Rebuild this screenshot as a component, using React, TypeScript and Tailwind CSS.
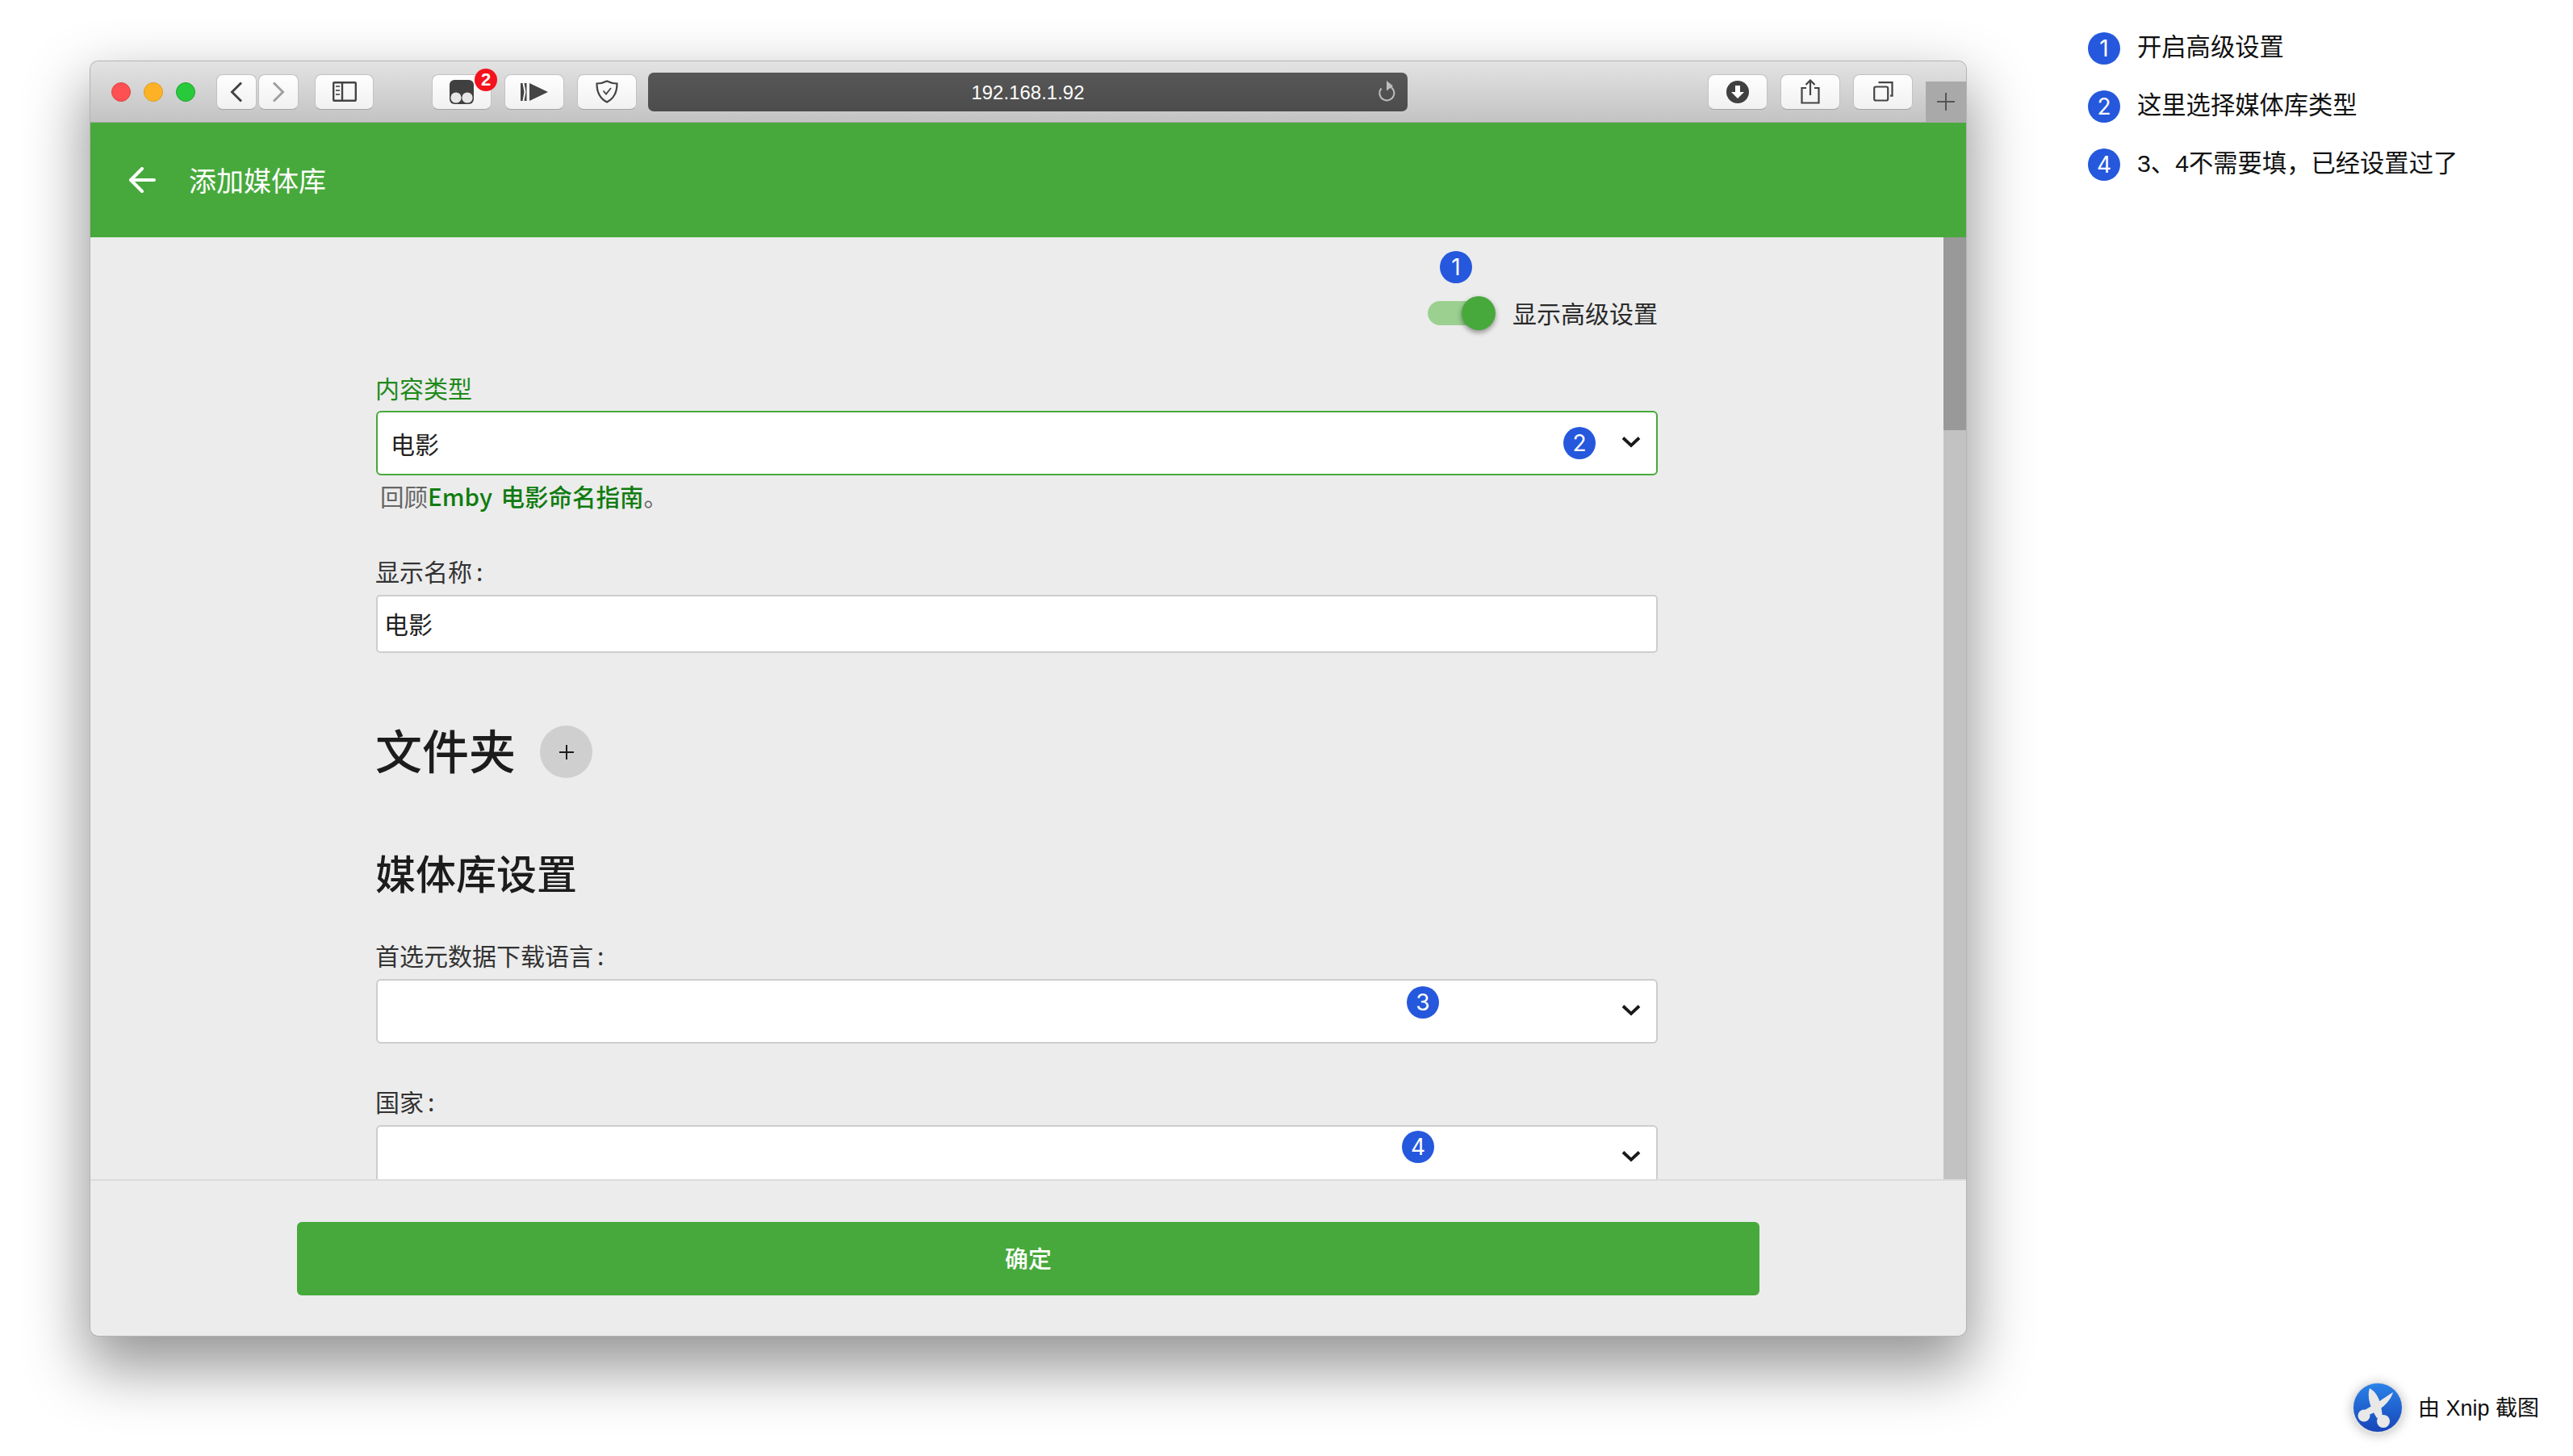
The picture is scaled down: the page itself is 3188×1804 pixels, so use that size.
import React from 'react';

const Chevron = () => (
  <svg width="24" height="15" viewBox="0 0 24 15" className="-mt-[3px]" fill="none" stroke="#1a1a1a" strokeWidth="3.8">
    <path d="M2 2.5 12 12 22 2.5" />
  </svg>
);

const Badge = ({ n, className = '' }: { n: number; className?: string }) => (
  <span className={`flex h-[40px] w-[40px] items-center justify-center rounded-full bg-[#2558dc] font-['Inter',sans-serif] text-[28px] leading-none text-white ${className}`}>
    {n}
  </span>
);

const ToolBtn = ({ w = 'w-[74px]', className = '', children }: { w?: string; className?: string; children?: React.ReactNode }) => (
  <div className={`relative flex h-[44px] ${w} items-center justify-center rounded-[8px] border border-[#c2c2c2] border-b-[#a5a5a5] bg-gradient-to-b from-[#fefefe] to-[#f1f1f1] ${className}`}>
    {children}
  </div>
);

const Select = ({ focused = false, value, badge }: { focused?: boolean; value?: string; badge?: React.ReactNode }) => (
  <div className={`relative flex h-[80px] shrink-0 items-center justify-between rounded-[6px] border-[2px] bg-white pl-[16px] pr-[19px] text-[30px] text-[#222] ${focused ? 'border-[#47a93b]' : 'border-[#cdcdcd]'}`}>
    <span>{value}</span>
    <Chevron />
    {badge}
  </div>
);

const Label = ({ children, className = 'text-[#333]' }: { children: React.ReactNode; className?: string }) => (
  <div className={`-ml-[1px] h-[36px] text-[30px] leading-[32px] ${className}`}>{children}</div>
);

const Colon = () => <span className="ml-[5px]">:</span>;

const Note = ({ n, text }: { n: number; text: string }) => (
  <div className="flex h-[40px] items-center gap-[21px]">
    <Badge n={n} />
    <span className="-mt-[2px] text-[30.3px] leading-[40px] text-[#111]">{text}</span>
  </div>
);

export default function App() {
  return (
    <div className="flex h-[1804px] w-[3188px] overflow-hidden bg-white font-['Noto_Sans_CJK_SC','Noto_Sans',sans-serif]">
      {/* browser window */}
      <div className="ml-[112px] mt-[76px] flex h-[1579px] w-[2324px] shrink-0 flex-col overflow-hidden rounded-[10px] shadow-[0_0_0_1px_#b4b4b4,0_34px_76px_6px_rgba(0,0,0,0.42)]">
        {/* toolbar */}
        <div className="flex h-[76px] shrink-0 items-center border-b border-[#a9a9a9] bg-gradient-to-b from-[#e3e3e3] to-[#c3c3c3] pl-[26px]">
          <div className="flex gap-[16px]">
            <span className="h-[24px] w-[24px] rounded-full border border-[#e0443e] bg-[#fc5053]" />
            <span className="h-[24px] w-[24px] rounded-full border border-[#d99e26] bg-[#fdb226]" />
            <span className="h-[24px] w-[24px] rounded-full border border-[#20a52c] bg-[#28c93a]" />
          </div>
          <ToolBtn w="w-[50px]" className="ml-[26px]">
            <svg width="16" height="26" viewBox="0 0 16 26" fill="none" stroke="#444" strokeWidth="3"><path d="M14 1.5 2.5 13 14 24.5" /></svg>
          </ToolBtn>
          <ToolBtn w="w-[50px]" className="ml-[2px]">
            <svg width="16" height="26" viewBox="0 0 16 26" fill="none" stroke="#a0a0a0" strokeWidth="3"><path d="M2 1.5 13.5 13 2 24.5" /></svg>
          </ToolBtn>
          <ToolBtn w="w-[73px]" className="ml-[20px]">
            <svg width="30" height="25" viewBox="0 0 30 25" fill="none">
              <rect x="1.2" y="1.2" width="27.6" height="22.6" rx="1" stroke="#444" strokeWidth="2.4" />
              <path d="M12 1v23" stroke="#444" strokeWidth="2.4" />
              <path d="M4 6h5M4 11h5M4 16h5" stroke="#666" strokeWidth="2.2" />
            </svg>
          </ToolBtn>
          <ToolBtn className="ml-[72px]">
            <svg width="30" height="30" viewBox="0 0 30 30">
              <rect width="30" height="30" rx="6" fill="#404040" />
              <circle cx="8" cy="22" r="6.6" fill="#e6e6e6" />
              <circle cx="22" cy="22" r="6.6" fill="#e6e6e6" />
            </svg>
            <span className="absolute -right-[8px] -top-[8px] flex h-[28px] w-[28px] items-center justify-center rounded-full bg-[#f4121d] font-['Liberation_Sans',sans-serif] text-[22px] font-bold leading-none text-white">2</span>
          </ToolBtn>
          <ToolBtn className="ml-[16px]">
            <svg width="34" height="22" viewBox="0 0 34 22" fill="#444">
              <path d="M0 0h2.5l2 11-2 11H0zM4.5 0h3v22h-3l2-11zM11 0l23 11-23 11z" />
            </svg>
          </ToolBtn>
          <ToolBtn className="ml-[16px]">
            <svg width="28" height="29" viewBox="0 0 28 29" fill="none" stroke="#444" strokeWidth="2.2">
              <path d="M14 1.5c4 2 8 3 12.5 3 0 10-2.500 18-12.500 23C4 22.500 1.500 14.500 1.500 4.500 6 4.500 10 3.500 14 1.500Z" />
              <path d="M9.500 13.500 13 17.500 19 10" strokeWidth="1.8" />
            </svg>
          </ToolBtn>
          <div className="relative ml-[14px] flex h-[48px] w-[941px] items-center justify-center rounded-[7px] bg-gradient-to-b from-[#575757] to-[#4c4c4c]">
            <span className="mt-[3px] font-['Liberation_Sans',sans-serif] text-[24px] leading-none text-white">192.168.1.92</span>
            <svg className="absolute right-[14px] top-[10px]" width="24" height="26" viewBox="0 0 24 26" fill="none">
              <path d="M14 6.500a9 9 0 1 1-8.500 3" stroke="#bdbdbd" strokeWidth="2" />
              <path d="M12 0l8 6.500-8 6z" fill="#bdbdbd" />
            </svg>
          </div>
          <ToolBtn className="ml-[372px]">
            <svg width="28" height="28" viewBox="0 0 28 28">
              <circle cx="14" cy="14" r="14" fill="#404040" />
              <path d="M11 6h6v8h5l-8 8-8-8h5z" fill="#fff" />
            </svg>
          </ToolBtn>
          <ToolBtn className="ml-[16px]">
            <svg width="24" height="31" viewBox="0 0 24 31" fill="none" stroke="#444" strokeWidth="2.2">
              <path d="M7 11H1.500v18.500h21V11H17M12 20V1.500M6.500 7 12 1.500 17.500 7" />
            </svg>
          </ToolBtn>
          <ToolBtn className="ml-[16px]">
            <svg width="25" height="25" viewBox="0 0 25 25" fill="none" stroke="#444" strokeWidth="2.2">
              <rect x="1.200" y="6.500" width="17" height="17" rx="2" />
              <path d="M6.500 1.200h17v16.500h-2.500" />
            </svg>
          </ToolBtn>
          <div className="ml-[16px] flex h-[50px] w-[50px] items-center justify-center self-end bg-[#a9a9a9]">
            <svg width="24" height="24" viewBox="0 0 24 24" stroke="#555" strokeWidth="2"><path d="M12 1v22M1 12h22" /></svg>
          </div>
        </div>

        {/* app bar */}
        <div className="flex h-[142px] shrink-0 items-center bg-[#47a93b] pl-[47px]">
          <svg width="34" height="32" viewBox="0 0 34 32" fill="none" stroke="#fff" strokeWidth="4" strokeLinecap="round" strokeLinejoin="round">
            <path d="M17 2 3 16l14 14M3 16h29" />
          </svg>
          <span className="-mt-[1px] ml-[41px] text-[34px] leading-none text-white">添加媒体库</span>
        </div>

        {/* scrolling content */}
        <div className="flex h-[1167px] shrink-0 overflow-hidden bg-[#ececec]">
          <div className="w-[2296px] shrink-0 pl-[354px]">
            <div className="relative flex w-[1588px] flex-col">
              <div className="relative mt-[73px] flex h-[42px] shrink-0 items-center justify-end">
                <Badge n={1} className="absolute left-[1318px] -top-[56px]" />
                <div className="relative mr-[21px] h-[30px] w-[84px]">
                  <div className="absolute left-0 top-0 h-[30px] w-[70px] rounded-full bg-[#9bd091]" />
                  <div className="absolute right-0 -top-[6px] h-[42px] w-[42px] rounded-full bg-[#47a93b] shadow-[0_3px_6px_rgba(0,0,0,0.4)]" />
                </div>
                <span className="-mt-[3px] text-[30px] leading-[42px] text-[#2a2a2a]">显示高级设置</span>
              </div>

              <Label className="mt-[55px] text-[#1f8a1a]">内容类型</Label>
              <div className="mt-[9px]">
                <Select focused value="电影" badge={<Badge n={2} className="absolute right-[75px] top-[18px]" />} />
              </div>
              <div className="mt-[7px] h-[39px] pl-[5px] text-[29.5px] leading-[36px] text-[#666]">
                回顾<span className="font-medium text-[#107c10] [word-spacing:4px]">Emby 电影命名指南</span>。
              </div>

              <Label className="mt-[56px] text-[#333]">显示名称<Colon /></Label>
              <div className="mt-[10px] flex h-[72px] items-center rounded-[5px] border-[2px] border-[#cdcdcd] bg-white pb-[2px] pl-[8px] text-[30px] text-[#222]">电影</div>

              <div className="mt-[90px] flex h-[65px] items-center">
                <h2 className="-ml-[1px] pb-[7px] text-[58px] font-medium leading-[62px] text-[#1c1c1c]">文件夹</h2>
                <div className="ml-[30px] flex h-[65px] w-[65px] items-center justify-center rounded-full bg-[#cfcfcf]">
                  <svg width="18" height="18" viewBox="0 0 18 18" stroke="#1c1c1c" strokeWidth="2"><path d="M9 0v18M0 9h18" /></svg>
                </div>
              </div>

              <h2 className="-ml-[1px] mt-[88px] h-[60px] text-[50px] font-medium leading-[56px] text-[#1c1c1c]">媒体库设置</h2>

              <Label className="mt-[55px] text-[#333]">首选元数据下载语言<Colon /></Label>
              <div className="mt-[10px]">
                <Select badge={<Badge n={3} className="absolute right-[269px] top-[7px]" />} />
              </div>

              <Label className="mt-[55px] text-[#333]">国家<Colon /></Label>
              <div className="mt-[10px]">
                <Select badge={<Badge n={4} className="absolute right-[275px] top-[5px]" />} />
              </div>
            </div>
          </div>
          {/* scrollbar */}
          <div className="w-[28px] shrink-0 bg-[#c2c2c2]">
            <div className="h-[239px] bg-[#999999]" />
          </div>
        </div>

        {/* footer */}
        <div className="flex-1 border-t-[2px] border-[#dcdcdc] bg-[#ececec] pl-[256px] pt-[51px]">
          <button className="flex h-[91px] w-[1812px] items-center justify-center rounded-[6px] bg-[#47a93b] pb-[2px] text-[29px] font-medium leading-none text-white">确定</button>
        </div>
      </div>

      {/* notes beside the window */}
      <div className="ml-[151px] flex h-full flex-1 flex-col gap-[32px] pb-[28px] pr-[42px] pt-[40px] font-['Liberation_Sans','Noto_Sans_CJK_SC',sans-serif]">
        <Note n={1} text="开启高级设置" />
        <Note n={2} text="这里选择媒体库类型" />
        <Note n={4} text="3、4不需要填，已经设置过了" />
        <div className="mt-auto flex items-center justify-end gap-[18px]">
          <svg width="64" height="64" viewBox="0 0 64 64" className="rounded-full shadow-[0_2px_14px_rgba(0,0,0,0.25)]">
            <defs>
              <linearGradient id="xnip" x1="0" y1="0" x2="0" y2="1">
                <stop offset="0" stopColor="#2a82e8" />
                <stop offset="1" stopColor="#1745b8" />
              </linearGradient>
            </defs>
            <circle cx="32" cy="32" r="32" fill="#dcdcdc" />
            <circle cx="32" cy="32" r="30" fill="url(#xnip)" />
            <path d="M22 8C32 14 36 24 38 44L31 45C24 34 18 20 22 8Z" fill="#e8e8e8" />
            <path d="M51 13C48 24 36 37 15 43L14 36C26 30 40 20 51 13Z" fill="#e8e8e8" />
            <circle cx="15" cy="42" r="7.500" fill="#e8e8e8" />
            <circle cx="39" cy="49" r="8" fill="#e8e8e8" />
          </svg>
          <span className="mt-[3px] text-[27px] leading-none text-[#111]">由 Xnip 截图</span>
        </div>
      </div>
    </div>
  );
}
